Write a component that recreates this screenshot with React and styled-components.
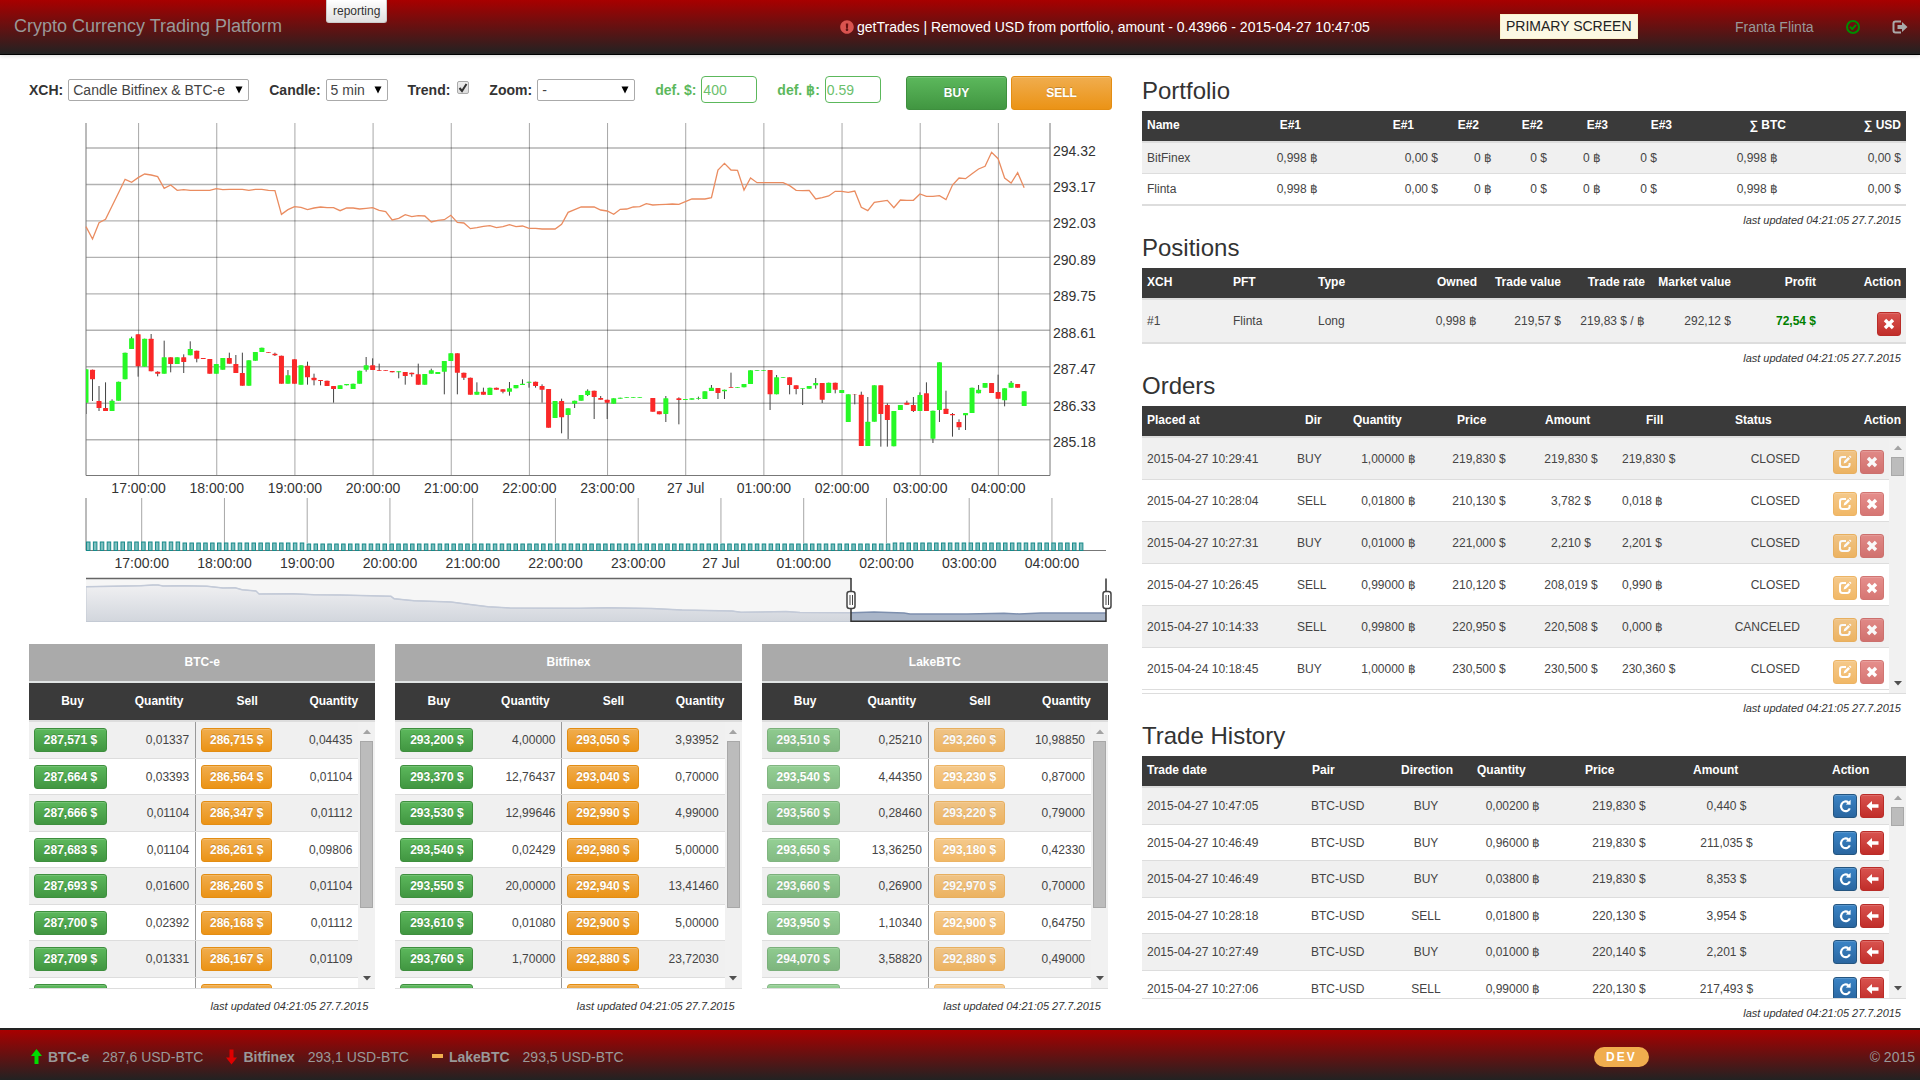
import React from 'react';
import styled, { createGlobalStyle, css } from 'styled-components';
import { FaExclamationCircle } from 'react-icons/fa';

const GlobalStyle = createGlobalStyle`
  *, *::before, *::after { box-sizing: border-box; }
  body {
    margin: 0;
    background: #fff;
    color: #333;
    font-family: "Liberation Sans", Arial, Helvetica, sans-serif;
    font-size: 12px;
  }
  button, input, select { font-family: inherit; margin: 0; }
`;

/* ---------- shared ---------- */

const tones = {
  success: ['#5cb85c', '#419641', '#3e8f3e'],
  warning: ['#f0ad4e', '#eb9316', '#e38d13'],
  danger: ['#d9534f', '#c12e2a', '#b92c28'],
  primary: ['#3a84c6', '#2a66a0', '#245580'],
};

const Button = styled.button`
  display: flex;
  align-items: center;
  justify-content: center;
  padding: 0;
  border: 1px solid ${(p) => tones[p.$tone][2]};
  border-radius: 3px;
  background: linear-gradient(${(p) => tones[p.$tone][0]}, ${(p) => tones[p.$tone][1]});
  box-shadow: inset 0 1px 0 rgba(255, 255, 255, 0.15);
  color: #fff;
  font-size: 12px;
  font-weight: bold;
  text-shadow: 0 -1px 0 rgba(0, 0, 0, 0.2);
  white-space: nowrap;
  opacity: ${(p) => (p.$muted ? 0.65 : 1)};
  cursor: pointer;
`;

const TradeButton = styled(Button)`
  width: 101px;
  height: 34px;
`;

const PriceButton = styled(Button)`
  flex: 1;
  height: 24px;
`;

const IconButton = styled(Button)`
  width: 24px;
  height: 24px;
`;

const Page = styled.div`
  display: flex;
  flex-direction: column;
  min-height: 100vh;
`;

/* ---------- top bar ---------- */

const TopBar = styled.header`
  display: grid;
  grid-template-columns: 326fr 514fr 660fr 235fr 185fr;
  align-items: center;
  height: 55px;
  padding-bottom: 1px;
  border-bottom: 1px solid #000;
  background: linear-gradient(#a80000, #222);
  box-shadow: 0 1px 4px rgba(0, 0, 0, 0.15);
  color: #999;
  font-size: 14px;
`;

const Brand = styled.a`
  padding-left: 14px;
  color: #999;
  font-size: 18px;
  text-decoration: none;
  white-space: nowrap;
`;

const ReportTab = styled.button`
  align-self: start;
  justify-self: start;
  height: 23px;
  padding: 0 6px;
  border: 1px solid #ccc;
  border-top: 0;
  border-radius: 0 0 3px 3px;
  background: linear-gradient(#fff, #e0e0e0);
  color: #333;
  font-size: 12px;
  cursor: pointer;
`;

const Alert = styled.div`
  display: flex;
  align-items: center;
  gap: 3px;
  color: #fff;
  white-space: nowrap;
  svg { color: #d9534f; }
`;

const ScreenTag = styled.span`
  justify-self: start;
  padding: 0 5px;
  border: 1px solid #faf2cc;
  background: #fcf8e3;
  color: #222;
  line-height: 23px;
  white-space: nowrap;
`;

const UserArea = styled.nav`
  display: flex;
  align-items: center;
  gap: 32px;
  white-space: nowrap;
  a { display: flex; color: #999; text-decoration: none; }
`;

/* ---------- layout ---------- */

const Main = styled.main`
  display: grid;
  grid-template-columns: minmax(0, 1083fr) minmax(0, 764fr);
  column-gap: 30px;
  padding: 21px 14px 0 29px;
`;

const Column = styled.div`
  display: flex;
  flex-direction: column;
`;

const DataColumn = styled(Column)`
  padding-top: 1px;
`;

/* ---------- toolbar ---------- */

const Toolbar = styled.div`
  display: flex;
  align-items: flex-start;
  justify-content: space-between;
`;

const Fields = styled.div`
  display: flex;
  align-items: center;
  gap: 20px;
  height: 27px;
`;

const Field = styled.div`
  display: flex;
  align-items: center;
  gap: 5px;
  color: ${(p) => (p.$accent ? '#5cb85c' : '#333')};
  label { font-size: 14px; font-weight: bold; white-space: nowrap; }
`;

const SelectBox = styled.span`
  display: grid;
  width: ${(p) => p.$width}px;
  align-items: center;
  select, svg { grid-area: 1 / 1; }
  select {
    appearance: none;
    width: 100%;
    height: 22px;
    padding: 0 4px;
    border: 1px solid #aaa;
    border-radius: 2px;
    background: #fff;
    color: #444;
    font-size: 14px;
  }
  svg { justify-self: end; margin-right: 6px; pointer-events: none; }
`;

const TickBox = styled.span`
  display: grid;
  place-items: center;
  margin: 0 0 4px 2px;
  input, svg { grid-area: 1 / 1; }
  input {
    appearance: none;
    width: 12px;
    height: 13px;
    border: 1px solid #aaa;
    border-radius: 2px;
    background: linear-gradient(#eee, #ddd);
  }
  svg { pointer-events: none; }
`;

const AmountInput = styled.input`
  width: 56px;
  height: 27px;
  padding: 0 1px;
  border: 1px solid #5cb85c;
  border-radius: 4px;
  color: #6cc06c;
  font-size: 14px;
`;

const TradeButtons = styled.div`
  display: flex;
  gap: 4px;
`;

const ChartSvg = styled.svg`
  display: block;
  width: 100%;
  overflow: visible;
  font-size: 14px;
  fill: #333;
`;

/* ---------- tables ---------- */

const Frame = styled.div`
  position: relative;
`;

const Table = styled.table`
  display: block;
  border-bottom: 1px solid #ddd;
  caption {
    display: block;
    height: 39px;
    border-bottom: 2px solid #e0e4e4;
    background: #aaa;
    color: #fff;
    font-weight: bold;
    line-height: 37px;
    text-align: center;
  }
  thead, tbody { display: block; }
  thead {
    border-bottom: 2px solid #ddd;
    background: #3a3a3a;
    color: #fff;
  }
  tbody {
    height: ${(p) => (p.$body ? `${p.$body}px` : 'auto')};
    overflow: hidden;
    margin-right: ${(p) => (p.$body ? 17 : 0)}px;
  }
  tr { display: grid; padding: 0 ${(p) => p.$pad}px; }
  thead tr { height: ${(p) => p.$head}px; grid-template-columns: ${(p) => tracks(p.$headCols)}; }
  tbody tr {
    height: ${(p) => p.$row}px;
    grid-template-columns: ${(p) => tracks(p.$bodyCols)};
    border-bottom: 1px solid #ddd;
  }
  tbody tr:nth-child(odd) { background: #f0f0f0; }
  ${(p) => p.$dense && css`
    tbody tr:nth-child(odd) { height: 37px; }
  `}
`;

function tracks(cols) {
  return cols.map((c) => `minmax(0, ${c[0]}fr)`).join(' ');
}

const justify = { L: 'flex-start', C: 'center', R: 'flex-end' };

const HeadCell = styled.th`
  display: flex;
  align-items: center;
  justify-content: ${(p) => justify[p.$align]};
  padding: 0 0 2px;
  font-size: 12px;
  white-space: nowrap;
`;

const Cell = styled.td`
  display: flex;
  align-items: center;
  justify-content: ${(p) => justify[p.$align]};
  padding: 0;
  color: #444;
  font-size: 12px;
  white-space: nowrap;
`;

const ActionCell = styled(Cell)`
  gap: 3px;
  padding-top: ${(p) => (p.$low ? 6 : 0)}px;
`;

const Profit = styled.strong`
  color: green;
`;

const OfferCell = styled(Cell)`
  padding: 0 5px;
`;

const BookQty = styled(Cell)`
  padding-right: 6px;
  border-right: ${(p) => (p.$divider ? '1px solid #999' : '0')};
`;

const Updated = styled.p`
  margin: 0;
  padding: ${(p) => (p.$book ? '3px 7px 0 0' : '0 5px 0 0')};
  color: #333;
  font-size: 11px;
  font-style: italic;
  line-height: 28px;
  text-align: right;
`;

const Title = styled.h2`
  margin: 0 0 6px;
  color: #333;
  font-size: 24px;
  font-weight: normal;
  line-height: 28px;
`;

const ScrollTrack = styled.div`
  position: absolute;
  right: 0;
  bottom: 1px;
  display: flex;
  flex-direction: column;
  align-items: center;
  justify-content: space-between;
  width: 17px;
  height: ${(p) => p.$height}px;
  padding: 7px 0;
  background: #f1f1f1;
`;

const ScrollThumb = styled.div`
  width: 13px;
  height: ${(p) => p.$height}px;
  margin: 7px 0 auto;
  border: 1px solid #a8a8a8;
  background: #bcbcbc;
`;

const Books = styled.div`
  display: grid;
  grid-template-columns: repeat(3, minmax(0, 1fr));
  gap: 20px;
  padding-right: 4px;
`;

/* ---------- footer ---------- */

const Footer = styled.footer`
  display: grid;
  grid-template-columns: 1594fr 326fr;
  align-items: center;
  height: 52px;
  margin-top: auto;
  padding-top: 3px;
  border-top: 2px solid #222;
  background: linear-gradient(#a80000, #222);
  color: #999;
  font-size: 14px;
`;

const Tickers = styled.div`
  display: flex;
  gap: 23px;
  padding-left: 31px;
`;

const Ticker = styled.span`
  display: flex;
  align-items: center;
  white-space: nowrap;
  strong { margin: 0 13px 0 6px; }
`;

const FooterEnd = styled.div`
  display: flex;
  align-items: center;
  justify-content: space-between;
  padding-right: 5px;
`;

const Badge = styled.span`
  padding: 0 12px;
  border-radius: 10px;
  background: #f0ad4e;
  color: #fff;
  font-size: 12px;
  font-weight: bold;
  letter-spacing: 2px;
  line-height: 20px;
`;

/* ---------- icons ---------- */

const CrossIcon = () => (
  <svg width="12" height="12" viewBox="0 0 12 12">
    <path d="M3.2 0.8 6 3.6 8.8 0.8 11.2 3.2 8.4 6 11.2 8.8 8.8 11.2 6 8.4 3.2 11.2 0.8 8.8 3.6 6 0.8 3.2Z" fill="#fff" />
  </svg>
);

const EditIcon = () => (
  <svg width="13" height="13" viewBox="0 0 13 13">
    <path d="M7 2H3.4Q1 2 1 4.400V9.600Q1 12 3.400 12H8.200Q10.600 12 10.600 9.600V8" fill="none" stroke="#fff" strokeWidth="2" />
    <path d="M4.600 8.600 5.200 6 9.200 2 11 3.800 7 7.800ZM10 1.400 10.900 0.500 12.500 2.100 11.600 3Z" fill="#fff" />
  </svg>
);

const RepeatIcon = () => (
  <svg width="13" height="14" viewBox="0 0 13 14">
    <path d="M10.800 9.400A4.600 4.900 0 1 1 9.300 3.300" fill="none" stroke="#fff" strokeWidth="2.200" />
    <path d="M6.800 5.400 11.600 5.800 11.600 0.800Z" fill="#fff" />
  </svg>
);

const LeftIcon = () => (
  <svg width="13" height="12" viewBox="0 0 13 12">
    <path d="M0.500 6 6 1V4.300H12.500V7.700H6V11Z" fill="#fff" />
  </svg>
);

const UpIcon = () => (
  <svg width="11" height="16" viewBox="0 0 11 16">
    <path d="M5.500 0 11 7H7.500V15H3.500V7H0Z" fill="#0d0" />
  </svg>
);

const DownIcon = () => (
  <svg width="11" height="16" viewBox="0 0 11 16">
    <path d="M5.500 15.500 11 8.500H7.500V0.500H3.500V8.500H0Z" fill="#e00000" />
  </svg>
);

const FlatIcon = () => (
  <svg width="11" height="16" viewBox="0 0 11 16">
    <rect y="5" width="11" height="4" fill="#f0ad4e" />
  </svg>
);

const OkIcon = () => (
  <svg width="14" height="14" viewBox="0 0 14 14" fill="none" stroke="#008c00" strokeWidth="2">
    <circle cx="7" cy="7" r="6" />
    <path d="M4 6.800 6.300 9 10 4.800" />
  </svg>
);

const LogoutIcon = () => (
  <svg width="16" height="14" viewBox="0 0 16 14">
    <path d="M9 1.500H3.500Q1.500 1.500 1.500 3.500V10.500Q1.500 12.500 3.500 12.500H9" fill="none" stroke="#aaa" strokeWidth="2" />
    <path d="M5.500 5H10V2L15.500 7 10 12V9H5.500Z" fill="#aaa" />
  </svg>
);

const Caret = () => (
  <svg width="8" height="8" viewBox="0 0 8 8">
    <path d="M0.500 0.500H7.500L4 7.500Z" fill="#000" />
  </svg>
);

const Tick = () => (
  <svg width="10" height="10" viewBox="0 0 10 10">
    <path d="M1.500 5 4 8 8.500 1" fill="none" stroke="#333" strokeWidth="2" />
  </svg>
);

/* ---------- chart ---------- */

const STEP = 6.515;
const LEFT = 86;

const TREND = [
  680, 717, 668, 658, 618, 578, 538, 547, 533, 522, 525, 530, 565, 555, 571, 569, 571, 571, 571, 571,
  566, 569, 568, 568, 568, 571, 568, 568, 571, 572, 643, 629, 620, 622, 629, 624, 621, 623, 623, 632,
  624, 624, 627, 625, 623, 631, 635, 660, 655, 644, 650, 647, 648, 666, 661, 659, 646, 667, 669, 686,
  683, 679, 677, 683, 680, 674, 680, 678, 685, 685, 687, 687, 687, 673, 637, 629, 621, 621, 621, 630,
  633, 643, 628, 627, 621, 620, 611, 615, 614, 613, 612, 613, 605, 597, 597, 597, 593, 510, 490, 510,
  511, 570, 534, 548, 548, 548, 548, 548, 557, 571, 572, 571, 597, 593, 588, 574, 574, 577, 573, 622,
  632, 607, 604, 601, 623, 600, 601, 601, 582, 589, 589, 587, 599, 555, 534, 536, 521, 507, 499, 457,
  476, 534, 549, 518, 563,
];

/* slot, direction, body top, body bottom, wick top, wick bottom */
const CANDLES = `
0 g 88 188 88 222|1 r 89 118 89 183|2 r 183 204 138 213|3 r 204 213 127 213|4 g 182 213 178 213|5 g 125 182|6 g 38 118
7 g -5 27 -10 27|8 r -17 79 -17 110|9 g -4 80|10 r -4 94 -18 94|11 r 95 101 94 109|12 g 52 101 2 101|13 r 52 72 52 97
14 g 52 72|15 r 52 66 43 99|16 g 27 46 4 46|17 r 32 56 32 67|18 r 54 57|19 r 57 101|20 g 72 101|21 g 54 89|22 r 54 71 38 71
23 r 72 99 45 99|24 r 99 137 38 137|25 g 61 137|26 g 36 62|27 g 23 36|28 r 36 38|29 r 41 46 38 48|30 r 47 131
31 g 106 131 90 131|32 r 58 131|33 g 76 134|34 r 77 112 65 134|35 r 113 121 101 136|36 r 120 123 120 136|37 r 122 138
38 r 138 147 138 188|39 g 136 147|40 g 132 136|41 g 131 147|42 g 92 131|43 g 76 89 51 95|44 r 76 90 55 90
45 r 91 93 71 93|46 r 91 93|47 r 93 97|48 g 94 97 94 115|49 r 96 108 96 134|50 r 98 103 98 110|51 r 103 134 71 134
52 g 102 134|53 g 91 101 86 101|54 g 96 102|55 g 63 95 63 163|56 g 40 63|57 r 40 98 40 163|58 r 98 113 98 120
59 r 113 164|60 g 155 164 127 164|61 r 155 164 143 164|62 g 143 165|63 r 143 149|64 r 148 155 148 160
65 g 145 155 126 167|66 g 135 145|67 g 131 135 118 135|68 g 125 128 125 143|69 r 125 138 125 143|70 r 138 149 133 188
71 r 147 263|72 g 183 234|73 r 183 232 176 280|74 g 205 225 205 297|75 g 182 191 182 204|76 g 165 182
77 g 152 165 148 168|78 r 152 171 152 237|79 r 174 179 168 179|80 r 179 188 179 237|81 g 175 191|82 g 173 176
83 g 171 173|84 g 171 173|85 g 171 173|87 r 174 215|88 r 214 223|89 g 175 222 168 246|91 r 175 180 172 253
92 g 177 180|93 g 175 179|94 g 175 177 170 179|95 g 154 177|96 g 143 153 135 153|97 r 144 159 144 177
98 g 149 154 149 177|99 r 141 143 98 143|100 g 141 143|101 g 132 142|102 g 91 132|103 g 91 93|104 g 90 92
105 r 90 163 90 210|106 g 112 163 105 163|107 g 111 113|108 r 112 135 112 163|109 r 136 147 136 163|110 g 145 147 145 195
111 g 138 146|112 g 129 136 114 146|113 r 129 179 129 189|114 g 128 159|115 r 128 149 128 160|116 g 150 159
117 g 163 246|118 r 162 163 162 193|119 r 164 318 155 318|120 g 245 318 171 318|121 g 136 245|122 r 136 222 136 320
123 r 195 240 190 320|124 g 213 319|125 g 195 210|126 r 188 194 182 194|127 r 195 213 171 216|128 g 165 213 157 213
129 r 160 213 127 213|130 g 212 296 212 309|131 g 67 210 67 246|132 r 206 222 152 222|133 r 222 226 219 290
134 r 246 262 238 270|135 g 219 226 219 270|136 g 143 219|137 g 149 160 135 160|138 g 129 143|139 r 129 159
140 r 156 176 104 176|141 g 145 181 145 199|142 g 128 143 123 143|143 r 132 143|144 g 154 198
`.trim().split(/[|\n]/).map((row) => {
  const [slot, dir, top, bottom, high = top, low = bottom] = row.trim().split(' ');
  const y = (v) => 340 + Number(v) / 3;
  return { x: LEFT + STEP * slot, up: dir === 'g', top: y(top), bottom: y(bottom), high: y(high), low: y(low) };
});

const OVERVIEW = [
  [86, 586.7], [141, 585.7], [153, 585], [158, 585], [163, 586], [183, 585.7], [207, 586.2], [223, 588], [235, 587.700],
  [242, 589.7], [256, 591], [259, 594], [292, 593.7], [314, 594.7], [340, 595], [391, 596.3], [394, 598.7], [414, 600.7],
  [451, 602], [466, 604], [488, 606.7], [510, 608], [580, 608.3], [608, 607.8], [652, 608.5], [682, 610], [732, 611],
  [741, 612.3], [786, 611.5], [800, 612.5], [851, 612.7], [874, 612], [904, 613], [910, 614], [967, 614], [1004, 613.3],
  [1019, 614], [1041, 613], [1106, 613],
];

const HOURS = ['17:00:00', '18:00:00', '19:00:00', '20:00:00', '21:00:00', '22:00:00', '23:00:00', '27 Jul', '01:00:00', '02:00:00', '03:00:00', '04:00:00'];
const PRICES = ['294.32', '293.17', '292.03', '290.89', '289.75', '288.61', '287.47', '286.33', '285.18'];

const hourX = (i) => 138.6 + 78.16 * i;
const volumeX = (i) => 141.7 + 82.75 * i;
const priceY = (i) => 148 + 36.46 * i;

function volumeTop(i) {
  if (i < 14) return 542;
  if (i < 32) return 543;
  if (i < 117) return 544;
  return 543;
}

function Handle({ x }) {
  return (
    <g fill="#fff" stroke="#444" strokeWidth="1.500">
      <rect x={x - 4} y="591.500" width="8" height="17" rx="2.500" />
      <path d={`M${x - 1} 595V605M${x + 1.500} 595V605`} strokeWidth="1" />
    </g>
  );
}

function Chart() {
  const trend = TREND.map((v, i) => `${LEFT + STEP * i},${v / 3}`).join(' ');
  const line = OVERVIEW.map((p) => p.join(',')).join(' ');
  const area = `${LEFT},621.5 ${line} 1106,621.5`;
  return (
    <ChartSvg viewBox="29 110 1083 534" role="img" aria-label="Price chart">
      <defs>
        <linearGradient id="overview" x1="0" y1="0" x2="0" y2="1">
          <stop offset="0" stopColor="#f0f0f2" />
          <stop offset="1" stopColor="#d2d6dd" />
        </linearGradient>
        <clipPath id="before"><rect x="86" y="575" width="765" height="50" /></clipPath>
        <clipPath id="selected"><rect x="851" y="575" width="255" height="50" /></clipPath>
        <clipPath id="plot"><rect x="86" y="122" width="964" height="354" /></clipPath>
      </defs>

      <g stroke="#000" strokeOpacity="0.350" strokeWidth="1">
        {HOURS.map((h, i) => <path key={h} d={`M${hourX(i)} 123V475`} />)}
        {PRICES.map((p, i) => <path key={p} d={`M86 ${priceY(i)}H1050`} strokeOpacity="0.300" strokeWidth="1.400" />)}
        {HOURS.map((h, i) => <path key={h} d={`M${volumeX(i)} 498V543`} />)}
      </g>
      <path d="M86 123V475.500H1050V123M86 498V550.500H1106" fill="none" stroke="#777" />

      <g clipPath="url(#plot)">
        {CANDLES.map((c) => (
          <g key={c.x}>
            <path d={`M${c.x} ${c.high}V${c.low}`} stroke="#444" />
            <rect x={c.x - 2.500} y={c.top} width="5" height={c.bottom - c.top} rx="0.500" fill={c.up ? '#26f826' : '#fa2828'} />
          </g>
        ))}
      </g>
      <polyline points={trend} fill="none" stroke="#ea8c60" strokeWidth="1.300" />

      <g fill="#7fbfbf" stroke="#168a8a">
        {Array.from({ length: 145 }, (_, i) => (
          <rect key={i} x={86.500 + 6.895 * i} y={volumeTop(i)} width="3.500" height={550.500 - volumeTop(i)} />
        ))}
      </g>

      {HOURS.map((h, i) => <text key={h} x={hourX(i)} y="493" textAnchor="middle">{h}</text>)}
      {HOURS.map((h, i) => <text key={h} x={volumeX(i)} y="568" textAnchor="middle">{h}</text>)}
      {PRICES.map((p, i) => <text key={p} x="1053" y={priceY(i) + 7.500}>{p}</text>)}

      <rect x="86" y="578" width="765" height="43" fill="#f6f6f6" />
      <g clipPath="url(#before)">
        <polygon points={area} fill="url(#overview)" stroke="#c4cad4" />
        <polyline points={line} fill="none" stroke="#c3cad8" strokeWidth="1.500" />
      </g>
      <g clipPath="url(#selected)">
        <polygon points={area} fill="#a9b5c8" />
        <polyline points={line} fill="none" stroke="#7d8fae" strokeWidth="1.500" />
      </g>
      <path d="M86 578.500H851" fill="none" stroke="#666" strokeWidth="1.500" />
      <path d="M851 578V621.300H1106V578.500" fill="none" stroke="#333" strokeWidth="1.500" />
      <Handle x={851} />
      <Handle x={1107} />
    </ChartSvg>
  );
}

/* ---------- scroll bar ---------- */

function ScrollBar({ height, thumb }) {
  return (
    <ScrollTrack $height={height} aria-hidden="true">
      <svg width="8" height="5" viewBox="0 0 8 5"><path d="M0 5 4 0.500 8 5Z" fill="#a3a3a3" /></svg>
      <ScrollThumb $height={thumb} />
      <svg width="8" height="5" viewBox="0 0 8 5"><path d="M0 0 4 4.500 8 0Z" fill="#505050" /></svg>
    </ScrollTrack>
  );
}

/* ---------- order books ---------- */

const BOOK_HEAD = [[87], [86], [90], [83]];
const BOOK_BODY = [[83], [84], [81], [81]];

const BOOKS = [
  {
    name: 'BTC-e',
    rows: [
      ['287,571', '0,01337', '286,715', '0,04435'],
      ['287,664', '0,03393', '286,564', '0,01104'],
      ['287,666', '0,01104', '286,347', '0,01112'],
      ['287,683', '0,01104', '286,261', '0,09806'],
      ['287,693', '0,01600', '286,260', '0,01104'],
      ['287,700', '0,02392', '286,168', '0,01112'],
      ['287,709', '0,01331', '286,167', '0,01109'],
    ],
  },
  {
    name: 'Bitfinex',
    rows: [
      ['293,200', '4,00000', '293,050', '3,93952'],
      ['293,370', '12,76437', '293,040', '0,70000'],
      ['293,530', '12,99646', '292,990', '4,99000'],
      ['293,540', '0,02429', '292,980', '5,00000'],
      ['293,550', '20,00000', '292,940', '13,41460'],
      ['293,610', '0,01080', '292,900', '5,00000'],
      ['293,760', '1,70000', '292,880', '23,72030'],
    ],
  },
  {
    name: 'LakeBTC',
    muted: true,
    rows: [
      ['293,510', '0,25210', '293,260', '10,98850'],
      ['293,540', '4,44350', '293,230', '0,87000'],
      ['293,560', '0,28460', '293,220', '0,79000'],
      ['293,650', '13,36250', '293,180', '0,42330'],
      ['293,660', '0,26900', '292,970', '0,70000'],
      ['293,950', '1,10340', '292,900', '0,64750'],
      ['294,070', '3,58820', '292,880', '0,49000'],
    ],
  },
];

const STAMP = 'last updated 04:21:05 27.7.2015';

function BookRow({ buy, buyQty, sell, sellQty, muted }) {
  return (
    <tr>
      <OfferCell $align="L"><PriceButton $tone="success" $muted={muted}>{buy}</PriceButton></OfferCell>
      <BookQty $align="R" $divider>{buyQty}</BookQty>
      <OfferCell $align="L"><PriceButton $tone="warning" $muted={muted}>{sell}</PriceButton></OfferCell>
      <BookQty $align="R">{sellQty}</BookQty>
    </tr>
  );
}

function Book({ name, rows, muted }) {
  return (
    <section>
      <Frame>
        <Table $head={37} $row={36} $dense $body={266} $pad={0} $headCols={BOOK_HEAD} $bodyCols={BOOK_BODY}>
          <caption>{name}</caption>
          <thead>
            <tr>
              {['Buy', 'Quantity', 'Sell', 'Quantity'].map((h, i) => <HeadCell key={i} $align="C">{h}</HeadCell>)}
            </tr>
          </thead>
          <tbody>
            {rows.map(([buy, buyQty, sell, sellQty]) => (
              <BookRow key={buy} buy={`${buy} $`} buyQty={buyQty} sell={`${sell} $`} sellQty={sellQty} muted={muted} />
            ))}
            <BookRow muted={muted} />
          </tbody>
        </Table>
        <ScrollBar height={266} thumb={167} />
      </Frame>
      <Updated $book>{STAMP}</Updated>
    </section>
  );
}

/* ---------- right-hand tables ---------- */

function DataPanel({ title, heads, headCols, bodyCols, rows, row, body, dense, thumb, actions }) {
  return (
    <section>
      <Title>{title}</Title>
      <Frame>
        <Table $head={30} $row={row} $dense={dense} $body={body} $pad={5} $headCols={headCols} $bodyCols={bodyCols}>
          <thead>
            <tr>{heads.map((h, i) => <HeadCell key={i} $align={headCols[i][1]}>{h}</HeadCell>)}</tr>
          </thead>
          <tbody>
            {rows.map((cells, r) => (
              <tr key={r}>
                {cells.map((c, i) => <Cell key={i} $align={bodyCols[i][1]}>{c}</Cell>)}
                {actions && <ActionCell $align="R" $low={!dense}>{actions}</ActionCell>}
              </tr>
            ))}
          </tbody>
        </Table>
        {body && <ScrollBar height={body} thumb={thumb} />}
      </Frame>
      <Updated>{STAMP}</Updated>
    </section>
  );
}

const PORTFOLIO = {
  title: 'Portfolio',
  row: 31,
  heads: ['Name', 'E#1', 'E#1', 'E#2', 'E#2', 'E#3', 'E#3', '∑ BTC', '∑ USD'],
  headCols: [[100, 'L'], [54, 'R'], [113, 'R'], [65, 'R'], [64, 'R'], [65, 'R'], [64, 'R'], [114, 'R'], [115, 'R']],
  bodyCols: [[100, 'L'], [71, 'R'], [120, 'R'], [54, 'R'], [55, 'R'], [54, 'R'], [56, 'R'], [121, 'R'], [123, 'R']],
  rows: ['BitFinex', 'Flinta'].map((n) => [n, '0,998 ฿', '0,00 $', '0 ฿', '0 $', '0 ฿', '0 $', '0,998 ฿', '0,00 $']),
};

const POSITION_COLS = [[86, 'L'], [85, 'L'], [79, 'L'], [80, 'R'], [84, 'R'], [84, 'R'], [86, 'R'], [85, 'R'], [85, 'R']];

const POSITIONS = {
  title: 'Positions',
  row: 43,
  heads: ['XCH', 'PFT', 'Type', 'Owned', 'Trade value', 'Trade rate', 'Market value', 'Profit', 'Action'],
  headCols: POSITION_COLS,
  bodyCols: POSITION_COLS,
  rows: [['#1', 'Flinta', 'Long', '0,998 ฿', '219,57 $', '219,83 $ / ฿', '292,12 $', <Profit key="p">72,54 $</Profit>]],
};

const ORDERS = {
  title: 'Orders',
  row: 42,
  body: 255,
  thumb: 19,
  heads: ['Placed at', 'Dir', 'Quantity', 'Price', 'Amount', 'Fill', 'Status', 'Action'],
  headCols: [[158, 'L'], [48, 'L'], [104, 'L'], [88, 'L'], [101, 'L'], [89, 'L'], [80, 'L'], [86, 'R']],
  bodyCols: [[150, 'L'], [42, 'L'], [99, 'C'], [82, 'C'], [102, 'C'], [100, 'L'], [78, 'R'], [84, 'R']],
  rows: [
    ['2015-04-27 10:29:41', 'BUY', '1,00000 ฿', '219,830 $', '219,830 $', '219,830 $', 'CLOSED'],
    ['2015-04-27 10:28:04', 'SELL', '0,01800 ฿', '210,130 $', '3,782 $', '0,018 ฿', 'CLOSED'],
    ['2015-04-27 10:27:31', 'BUY', '0,01000 ฿', '221,000 $', '2,210 $', '2,201 $', 'CLOSED'],
    ['2015-04-27 10:26:45', 'SELL', '0,99000 ฿', '210,120 $', '208,019 $', '0,990 ฿', 'CLOSED'],
    ['2015-04-27 10:14:33', 'SELL', '0,99800 ฿', '220,950 $', '220,508 $', '0,000 ฿', 'CANCELED'],
    ['2015-04-24 10:18:45', 'BUY', '1,00000 ฿', '230,500 $', '230,500 $', '230,360 $', 'CLOSED'],
  ],
};

const HISTORY = {
  title: 'Trade History',
  row: 36,
  dense: true,
  body: 210,
  thumb: 19,
  heads: ['Trade date', 'Pair', 'Direction', 'Quantity', 'Price', 'Amount', 'Action'],
  headCols: [[165, 'L'], [89, 'L'], [76, 'L'], [108, 'L'], [108, 'L'], [139, 'L'], [69, 'L']],
  bodyCols: [[164, 'L'], [80, 'L'], [70, 'C'], [104, 'C'], [108, 'C'], [107, 'C'], [104, 'R']],
  rows: [
    ['2015-04-27 10:47:05', 'BTC-USD', 'BUY', '0,00200 ฿', '219,830 $', '0,440 $'],
    ['2015-04-27 10:46:49', 'BTC-USD', 'BUY', '0,96000 ฿', '219,830 $', '211,035 $'],
    ['2015-04-27 10:46:49', 'BTC-USD', 'BUY', '0,03800 ฿', '219,830 $', '8,353 $'],
    ['2015-04-27 10:28:18', 'BTC-USD', 'SELL', '0,01800 ฿', '220,130 $', '3,954 $'],
    ['2015-04-27 10:27:49', 'BTC-USD', 'BUY', '0,01000 ฿', '220,140 $', '2,201 $'],
    ['2015-04-27 10:27:06', 'BTC-USD', 'SELL', '0,99000 ฿', '220,130 $', '217,493 $'],
  ],
};

function SelectField({ id, label, value, width }) {
  return (
    <Field>
      <label htmlFor={id}>{label}</label>
      <SelectBox $width={width}>
        <select id={id}><option>{value}</option></select>
        <Caret />
      </SelectBox>
    </Field>
  );
}

function AmountField({ id, label, value }) {
  return (
    <Field $accent>
      <label htmlFor={id}>{label}</label>
      <AmountInput id={id} defaultValue={value} />
    </Field>
  );
}

export default function App() {
  return (
    <Page>
      <GlobalStyle />
      <TopBar>
        <Brand href="#home">Crypto Currency Trading Platform</Brand>
        <ReportTab>reporting</ReportTab>
        <Alert>
          <FaExclamationCircle size={14} />
          <span>getTrades | Removed USD from portfolio, amount - 0.43966 - 2015-04-27 10:47:05</span>
        </Alert>
        <ScreenTag>PRIMARY SCREEN</ScreenTag>
        <UserArea>
          <a href="#profile">Franta Flinta</a>
          <OkIcon />
          <a href="#logout" aria-label="Log out"><LogoutIcon /></a>
        </UserArea>
      </TopBar>

      <Main>
        <Column>
          <Toolbar>
            <Fields>
              <SelectField id="xch" label="XCH:" value="Candle Bitfinex & BTC-e" width={181} />
              <SelectField id="candle" label="Candle:" value="5 min" width={62} />
              <Field>
                <label htmlFor="trend">Trend:</label>
                <TickBox>
                  <input id="trend" type="checkbox" defaultChecked />
                  <Tick />
                </TickBox>
              </Field>
              <SelectField id="zoom" label="Zoom:" value="-" width={98} />
              <AmountField id="usd" label="def. $:" value="400" />
              <AmountField id="btc" label="def. ฿:" value="0.59" />
            </Fields>
            <TradeButtons>
              <TradeButton $tone="success">BUY</TradeButton>
              <TradeButton $tone="warning">SELL</TradeButton>
            </TradeButtons>
          </Toolbar>
          <Chart />
          <Books>
            {BOOKS.map((b) => <Book key={b.name} {...b} />)}
          </Books>
        </Column>

        <DataColumn>
          <DataPanel {...PORTFOLIO} />
          <DataPanel
            {...POSITIONS}
            actions={<IconButton $tone="danger" aria-label="Close position"><CrossIcon /></IconButton>}
          />
          <DataPanel
            {...ORDERS}
            actions={(
              <>
                <IconButton $tone="warning" $muted aria-label="Edit order"><EditIcon /></IconButton>
                <IconButton $tone="danger" $muted aria-label="Cancel order"><CrossIcon /></IconButton>
              </>
            )}
          />
          <DataPanel
            {...HISTORY}
            actions={(
              <>
                <IconButton $tone="primary" aria-label="Repeat trade"><RepeatIcon /></IconButton>
                <IconButton $tone="danger" aria-label="Revert trade"><LeftIcon /></IconButton>
              </>
            )}
          />
        </DataColumn>
      </Main>

      <Footer>
        <Tickers>
          <Ticker><UpIcon /><strong>BTC-e</strong>287,6 USD-BTC</Ticker>
          <Ticker><DownIcon /><strong>Bitfinex</strong>293,1 USD-BTC</Ticker>
          <Ticker><FlatIcon /><strong>LakeBTC</strong>293,5 USD-BTC</Ticker>
        </Tickers>
        <FooterEnd>
          <Badge>DEV</Badge>
          <span>© 2015</span>
        </FooterEnd>
      </Footer>
    </Page>
  );
}
